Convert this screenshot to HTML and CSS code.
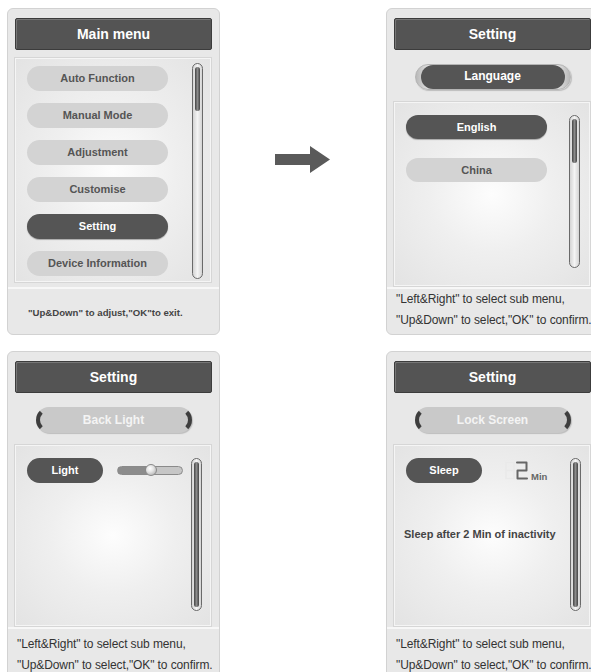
FILE: index.html
```html
<!DOCTYPE html>
<html lang="en">
<head>
  <meta charset="UTF-8" />
  <meta name="viewport" content="width=device-width, initial-scale=1" />
  <title>Menu screens</title>
  <link rel="stylesheet" href="styles.css">
</head>
<body>
  <div class="page">
    <!-- main menu -->
    <section class="screen">
      <div class="title">Main menu</div>
      <div class="box box-menu">
        <ul class="items">
          <li class="item">Auto Function</li>
          <li class="item">Manual Mode</li>
          <li class="item">Adjustment</li>
          <li class="item">Customise</li>
          <li class="item active">Setting</li>
          <li class="item">Device Information</li>
        </ul>
        <div class="scroll"><span class="thumb"></span></div>
      </div>
      <p class="hint hint-main">"Up&amp;Down" to adjust,"OK"to exit.</p>
    </section>

    <div class="arrow">
      <svg width="56" height="28" viewBox="0 0 56 28">
        <polygon points="0,8 35,8 35,0 55,13.5 35,27 35,19 0,19" fill="#5a5a5a" />
      </svg>
    </div>

    <!-- language -->
    <section class="screen">
      <div class="title">Setting</div>
      <div class="tab tab-on"><span>Language</span></div>
      <div class="box box-lang">
        <ul class="items">
          <li class="item lang active">English</li>
          <li class="item lang">China</li>
        </ul>
        <div class="scroll"><span class="thumb"></span></div>
      </div>
      <p class="hint">"Left&amp;Right" to select sub menu,<br>"Up&amp;Down" to select,"OK" to confirm.</p>
    </section>

    <!-- back light -->
    <section class="screen">
      <div class="title">Setting</div>
      <div class="tab"><span>Back Light</span></div>
      <div class="box box-sub">
        <div class="content">
          <div class="row">
            <span class="chip">Light</span>
            <span class="slider"></span>
          </div>
        </div>
        <div class="scroll"><span class="thumb full"></span></div>
      </div>
      <p class="hint hint-low">"Left&amp;Right" to select sub menu,<br>"Up&amp;Down" to select,"OK" to confirm.</p>
    </section>

    <!-- lock screen -->
    <section class="screen col3">
      <div class="title">Setting</div>
      <div class="tab"><span>Lock Screen</span></div>
      <div class="box box-sub">
        <div class="content">
          <div class="row">
            <span class="chip">Sleep</span>
            <span class="digits">
              <svg width="25" height="20" viewBox="0 0 25 20">
                <path d="M2 1.5 H10 V17.5 H2 Z M2 9.5 H10" fill="none" stroke="#e9e9e9" stroke-width="1.5" />
                <path d="M13 1.5 H22.5 V9.5 H13.5 V17.5 H23" fill="none" stroke="#666" stroke-width="2" stroke-linejoin="round" stroke-linecap="round" />
              </svg>
              <b>Min</b>
            </span>
          </div>
          <p class="sleep-text">Sleep after 2 Min of inactivity</p>
        </div>
        <div class="scroll"><span class="thumb full"></span></div>
      </div>
      <p class="hint hint-low">"Left&amp;Right" to select sub menu,<br>"Up&amp;Down" to select,"OK" to confirm.</p>
    </section>
  </div>
</body>
</html>
```

FILE: styles.css
```css
html, body {
  margin: 0;
  background: #fff;
  overflow: hidden;
}
body {
  font-family: "Liberation Sans", Arial, sans-serif;
  width: 591px;
  height: 672px;
}
.page {
  display: grid;
  grid-template-columns: 213px 166px 213px;
  row-gap: 16px;
  padding: 8px 0 0 7px;
}
.screen {
  box-sizing: border-box;
  height: 327px;
  padding: 9px 7px 0 7px;
  background: #e8e8e8;
  border: 1px solid #d2d2d2;
  border-radius: 6px;
  display: flex;
  flex-direction: column;
}
.screen > * {
  flex-shrink: 0;
}
.col3 {
  grid-column: 3;
}
.title {
  height: 32px;
  box-sizing: border-box;
  background: #545454;
  border: 1px solid #3c3c3c;
  border-radius: 2px;
  box-shadow: inset 1px 1px 0 #777;
  color: #fff;
  font-weight: bold;
  font-size: 14px;
  line-height: 30px;
  text-align: center;
}
.arrow {
  display: flex;
  justify-content: center;
  align-self: start;
  margin-top: 138px;
}

/* selector tab with bracket ends */
.tab {
  align-self: center;
  box-sizing: border-box;
  width: 156px;
  height: 26px;
  margin-top: 14px;
  border-radius: 13px;
  border: 4px solid transparent;
  border-left-color: #3e3e3e;
  border-right-color: #3e3e3e;
  background: #c9c9c9;
  box-shadow: 1px 1px 1px #bdbdbd;
  color: #f4f4f4;
  font-weight: bold;
  font-size: 12px;
  line-height: 18px;
  text-align: center;
}
.tab span {
  display: block;
}
.tab-on {
  border: 1px solid #b4b4b4;
  background: linear-gradient(to right, #b8b8b8, #e2e2e2 8%, #e2e2e2 92%, #b8b8b8);
  padding: 0 5px;
}
.tab-on span {
  height: 24px;
  background: #555;
  border-radius: 12px;
  color: #fff;
  line-height: 23px;
}

/* inner list area */
.box {
  box-sizing: border-box;
  margin: 11px 0 0 -1px;
  width: 198px;
  display: flex;
  border: 1px solid #d6d6d6;
  box-shadow: inset 0 0 0 1px #f5f5f5;
  background: radial-gradient(ellipse at 50% 50%, #fdfdfd 0%, #efefef 45%, #e3e3e3 100%);
}
.box-menu {
  margin-top: 7px;
  height: 226px;
  padding: 5px 8px 3px 12px;
}
.box-lang {
  height: 186px;
  padding: 13px 10px 18px 12px;
}
.box-sub {
  height: 183px;
  padding: 13px 9px 15px 12px;
}
.items {
  list-style: none;
  margin: 0;
  padding: 0;
}
.box-menu .items {
  margin-top: 3px;
}
.item {
  width: 141px;
  height: 25px;
  margin-bottom: 12px;
  border-radius: 13px;
  background: #d3d3d3;
  color: #555;
  font-weight: bold;
  font-size: 11px;
  line-height: 25px;
  text-align: center;
}
.item.lang {
  height: 24px;
  line-height: 24px;
  margin-bottom: 19px;
}
.item.active {
  background: #555;
  color: #fff;
  box-shadow: 0 1px 1px #a8a8a8;
}
.content {
  flex: 1;
}
.scroll {
  margin-left: auto;
  box-sizing: border-box;
  width: 11px;
  padding: 3px 2px;
  border: 1px solid #6a6a6a;
  border-radius: 6px;
  background: linear-gradient(to right, #d4d4d4, #f4f4f4, #d4d4d4);
}
.thumb {
  display: block;
  height: 44px;
  border-radius: 3px;
  background: linear-gradient(to right, #444, #8a8a8a, #444);
}
.thumb.full {
  height: 100%;
}

/* sub menu rows */
.row {
  display: flex;
  align-items: center;
}
.chip {
  width: 76px;
  height: 25px;
  border-radius: 13px;
  background: #555;
  color: #fff;
  font-weight: bold;
  font-size: 11px;
  line-height: 25px;
  text-align: center;
}
.slider {
  position: relative;
  box-sizing: border-box;
  margin-left: 14px;
  width: 66px;
  height: 9px;
  border: 1px solid #8a8a8a;
  border-radius: 5px;
  background: linear-gradient(to right, #8c8c8c 0 50%, #c6c6c6 50% 100%);
}
.slider::after {
  content: "";
  position: absolute;
  left: 27px;
  top: -3px;
  width: 12px;
  height: 12px;
  box-sizing: border-box;
  border: 1px solid #8a8a8a;
  border-radius: 50%;
  background: radial-gradient(circle at 40% 35%, #fff 0%, #e4e4e4 40%, #a0a0a0 100%);
}
.digits {
  display: flex;
  align-items: flex-end;
  margin-left: 22px;
  color: #666;
}
.digits svg {
  display: block;
}
.digits b {
  font-size: 9.5px;
  line-height: 9px;
  margin-left: 2px;
}
.sleep-text {
  margin: 44px 0 0 -2px;
  color: #444;
  font-weight: bold;
  font-size: 11px;
  line-height: 14px;
}

/* bottom hint */
.hint {
  margin: 0 -7px;
  padding: 0 0 0 9px;
  border-top: 2px solid #f7f7f7;
  color: #333;
  font-size: 12px;
  letter-spacing: -0.1px;
  line-height: 21px;
  white-space: nowrap;
}
.hint-low {
  padding-top: 5px;
}
.hint-main {
  margin-top: 4px;
  padding: 17px 0 0 20px;
  color: #444;
  font-weight: bold;
  font-size: 9.6px;
  letter-spacing: 0;
  line-height: 14px;
}
```
